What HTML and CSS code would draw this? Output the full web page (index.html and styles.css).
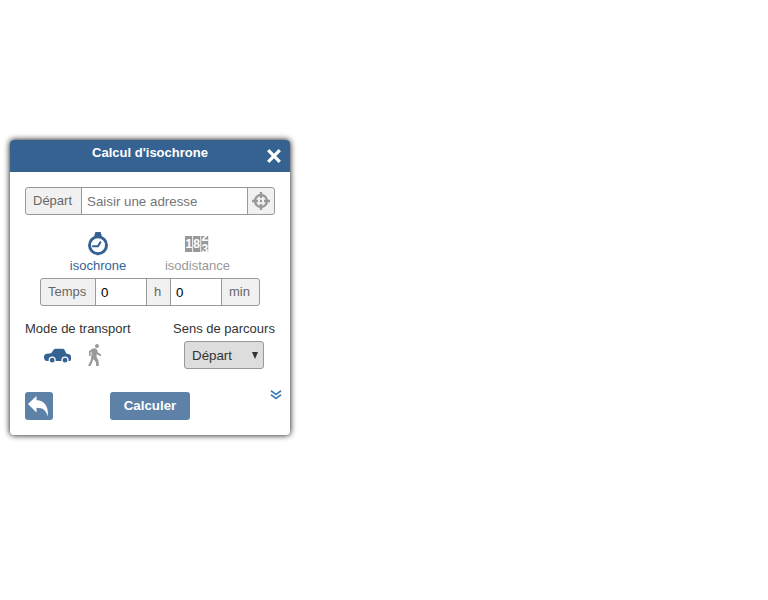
FILE: index.html
```
<!DOCTYPE html>
<html lang="fr">
<head>
<meta charset="utf-8">
<title>Calcul d'isochrone</title>
<link rel="stylesheet" href="styles.css">
</head>
<body>
<form class="panel">
  <header class="header">
    <span class="title">Calcul d'isochrone</span>
    <svg class="close" viewBox="0 0 14 14"><path d="M1.2 1.2L12.8 12.8M12.8 1.2L1.2 12.8"/></svg>
  </header>
  <div class="body">
    <div class="group origin">
      <label class="tag">Départ</label>
      <input class="address" type="text" placeholder="Saisir une adresse">
      <span class="locate"><svg width="18" height="18" viewBox="0 0 18 18"><circle cx="9" cy="9" r="6" /><path d="M9 0v6M9 12v6M0 9h6M12 9h6M8 9h2"/></svg></span>
    </div>
    <div class="methods">
      <div class="method active">
        <svg width="20" height="24" viewBox="0 0 20 24"><path class="fill" d="M7 1Q7 0 8 0h4q1 0 1 1v1h.5v4h-7V2H7z"/><circle cx="10" cy="13.2" r="8.5"/><path class="hand" d="M4.2 14.300H10L12.800 9.500"/></svg>
        <span>isochrone</span>
      </div>
      <div class="method">
        <svg width="24" height="24" viewBox="0 0 24 24"><defs><clipPath id="wheel"><path d="M16.2 4H23.2V20H16.2z"/></clipPath></defs><path class="fill" d="M0 4h7.2v16H0zM8.1 4h7.2v16H8.1zM16.2 4h7v16h-7z"/><text x="0.5" y="16.4">1</text><text x="8.3" y="16.4">8</text><g clip-path="url(#wheel)"><text x="16.5" y="9">2</text><text x="16.5" y="20.6">3</text></g></svg>
        <span>isodistance</span>
      </div>
    </div>
    <div class="group duration">
      <label class="tag">Temps</label>
      <input class="number" type="text" value="0">
      <label class="tag hours">h</label>
      <input class="number" type="text" value="0">
      <label class="tag minutes">min</label>
    </div>
    <div class="options">
      <div class="mode">
        <div class="label">Mode de transport</div>
        <div class="vehicles">
          <svg class="car" width="28" height="16" viewBox="0 0 28 16"><path d="M0 9Q0 6 3 5.700L7.200 5.200 9.800 1.500Q10.400 .7 11.600 .7H18.500Q20 .7 20.600 2L22.300 5.400Q27 6 27 8.500V11.500Q27 13 25.500 13H2.500Q0 12.500 0 9z"/><circle cx="8.2" cy="12.2" r="3"/><circle cx="21" cy="12.2" r="3"/></svg>
          <svg class="walk" width="14" height="23" viewBox="0 0 14 23"><circle cx="9" cy="2" r="2"/><path d="M4.2 4.7Q7 3.8 8.7 5.2L10.2 8.7 13 10.3V12.2L9.4 10.7 8.6 9.6V13.3L10.4 16.5 11 22H8.2L7.8 18 5.4 15 3.7 19.5 2.4 22H0L2.8 16 3.5 11V7.3L2.6 8.4V12H1V7.2z"/></svg>
        </div>
      </div>
      <div class="direction">
        <div class="label">Sens de parcours</div>
        <div class="select"><span>Départ</span><svg width="6" height="7" viewBox="0 0 6 7"><path d="M0 0H6L3 7z"/></svg></div>
      </div>
    </div>
    <footer class="footer">
      <button class="back" type="button"><svg width="21" height="21" viewBox="0 0 21 21"><path d="M0 8L8.500 0V4.300C15 4 21 9 19.800 20.500 18 14 15 11.800 8.500 11.700V16.500z"/></svg></button>
      <button class="submit" type="button">Calculer</button>
      <svg class="more" width="12" height="10" viewBox="0 0 12 10"><path d="M1 .8L6 4.500 11 .8M1 4.800L6 8.500 11 4.800"/></svg>
    </footer>
  </div>
</form>
</body>
</html>
```

FILE: styles.css
```
* { box-sizing: border-box; }
body {
  margin: 0;
  padding: 140px 10px;
  background: #fff;
  color: #333;
  font: 13px/15px "Liberation Sans", Arial, sans-serif;
}
svg { display: block; flex-shrink: 0; }
.panel {
  width: 280px;
  height: 295px;
  background: #fff;
  border-radius: 4px;
  box-shadow: 0 0 6px #000;
}
.header {
  position: relative;
  height: 32px;
  padding-top: 5px;
  border-radius: 4px 4px 0 0;
  background: #366291;
  color: #fff;
  font-weight: bold;
  text-align: center;
}
.close {
  position: absolute;
  top: 9px;
  right: 9px;
  width: 14px;
  height: 14px;
  fill: none;
  stroke: #fff;
  stroke-width: 3.2;
}
.body { padding: 15px 15px 0; }
.group {
  display: flex;
  height: 28px;
  border: 1px solid #999;
  border-radius: 3px;
  overflow: hidden;
  background: #f1f1f1;
}
.tag {
  width: 56px;
  padding: 5px 0 0 7px;
  border-right: 1px solid #999;
  color: #666;
}
.group input {
  min-width: 0;
  border: 0;
  border-right: 1px solid #999;
  padding: 0 5px;
  background: #fff;
  color: #000;
  font: 13.333px "Liberation Sans", Arial, sans-serif;
}
.group input::placeholder { color: #757575; }
.address { width: 166px; }
.locate { padding: 4px; }
.locate svg { fill: none; stroke: #999; stroke-width: 2.4; }
.methods { display: flex; margin-top: 17px; color: #999; }
.method {
  width: 99px;
  margin-left: 2px;
  display: flex;
  flex-direction: column;
  align-items: center;
  gap: 2px;
}
.method:not(.active) svg { margin-left: -1px; }
.method.active { width: 96px; margin-left: 25px; color: #366291; }
.method circle { fill: none; stroke: currentColor; stroke-width: 3; }
.method .fill { fill: currentColor; }
.method .hand { fill: none; stroke: currentColor; stroke-width: 2; }
.method text { fill: #fff; font: bold 12px "Liberation Sans", Arial, sans-serif; }
.duration { width: 220px; margin: 5px 0 0 15px; }
.duration .tag { width: 55px; }
.duration .number { width: 51px; }
.duration .hours { width: 24px; }
.duration .minutes { flex: 1; border: 0; }
.options { display: flex; justify-content: space-between; margin-top: 15px; }
.direction { width: 102px; }
.label { white-space: nowrap; }
.vehicles { display: flex; padding: 8px 0 0 19px; }
.car { margin-top: 4px; fill: #366291; }
.car circle { stroke: #fff; stroke-width: 1.2; }
.walk { margin-left: 16px; fill: #999; }
.select {
  display: flex;
  justify-content: space-between;
  width: 80px;
  height: 28px;
  margin: 5px 0 0 11px;
  padding: 6px 5px 0 7px;
  border: 1px solid #999;
  border-radius: 3px;
  background: #ddd;
  font-size: 13.333px;
}
.select svg { margin-top: 4px; fill: #333; }
.footer { display: flex; margin-top: 23px; }
button {
  flex-shrink: 0;
  height: 28px;
  padding: 0 0 1px;
  border: 0;
  border-radius: 3px;
  background: #5e81a7;
  color: #fff;
  font: bold 13.333px "Liberation Sans", Arial, sans-serif;
}
.back { width: 28px; padding: 0 0 0 3px; }
.back svg { margin-top: 1px; fill: #fff; }
.submit { width: 80px; margin-left: 57px; }
.more { margin: -2px 0 0 80px; fill: none; stroke: #4480b7; stroke-width: 1.7; }
```
